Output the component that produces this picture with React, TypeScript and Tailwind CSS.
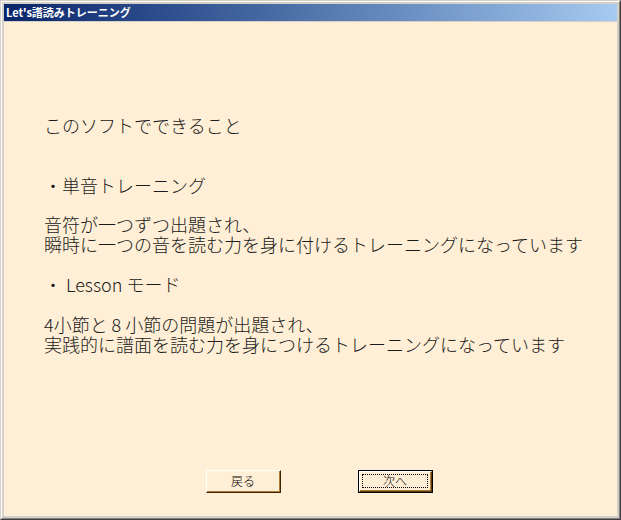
import React from "react";

const jp = { fontFamily: '"Noto Sans CJK JP", "Noto Sans", sans-serif' };

function Win98Button({ label, isDefault }: { label: string; isDefault?: boolean }) {
  if (isDefault) {
    return (
      <div className="w-[75px] h-[23px] border border-black">
        <div className="h-full w-full border-t border-l border-b border-r border-t-white border-l-white border-b-[#5a3a10] border-r-[#5a3a10]">
          <div className="h-full w-full border-b border-r border-b-[#b07a30] border-r-[#b07a30] p-[2px]">
            <div
              className="h-full w-full border border-dotted border-black flex items-center justify-center text-[12px] text-black leading-none"
              style={jp}
            >
              {label}
            </div>
          </div>
        </div>
      </div>
    );
  }
  return (
    <div className="w-[75px] h-[23px] border border-t-white border-l-white border-b-[#3a2600] border-r-[#3a2600]">
      <div
        className="h-full w-full border-b border-r border-b-[#b07a30] border-r-[#b07a30] flex items-center justify-center text-[12px] text-black leading-none"
        style={jp}
      >
        {label}
      </div>
    </div>
  );
}

export default function App() {
  return (
    <div className="w-[621px] h-[520px] border border-t-[#d4d0c8] border-l-[#d4d0c8] border-b-[#404040] border-r-[#404040]">
      <div className="h-full w-full border border-t-white border-l-white border-b-[#808080] border-r-[#808080] bg-[#d4d0c8] p-[2px] flex flex-col">
        {/* title bar */}
        <div className="h-[17px] shrink-0 flex items-center px-[2px] bg-gradient-to-r from-[#0a246a] to-[#a6caf0]">
          <span className="text-white font-bold text-[11px] leading-none" style={jp}>
            Let's譜読みトレーニング
          </span>
        </div>
        <div className="h-[1px] shrink-0" />
        {/* client area */}
        <div
          className="flex-1 bg-[#ffefd6] flex flex-col pl-[40px] pt-[93px] text-[18px] leading-[20px] text-[#1a1a1a] font-light"
          style={jp}
        >
          <div>このソフトでできること</div>
          <div className="mt-[40px]">・単音トレーニング</div>
          <div className="mt-[19px]">音符が一つずつ出題され、</div>
          <div>瞬時に一つの音を読む力を身に付けるトレーニングになっています</div>
          <div className="mt-[20px]">・ Lesson モード</div>
          <div className="mt-[20px]">4小節と 8 小節の問題が出題され、</div>
          <div>実践的に譜面を読む力を身につけるトレーニングになっています</div>
          <div className="mt-auto mb-[23px] flex gap-[77px] pl-[162px]">
            <Win98Button label="戻る" />
            <Win98Button label="次へ" isDefault />
          </div>
        </div>
      </div>
    </div>
  );
}
